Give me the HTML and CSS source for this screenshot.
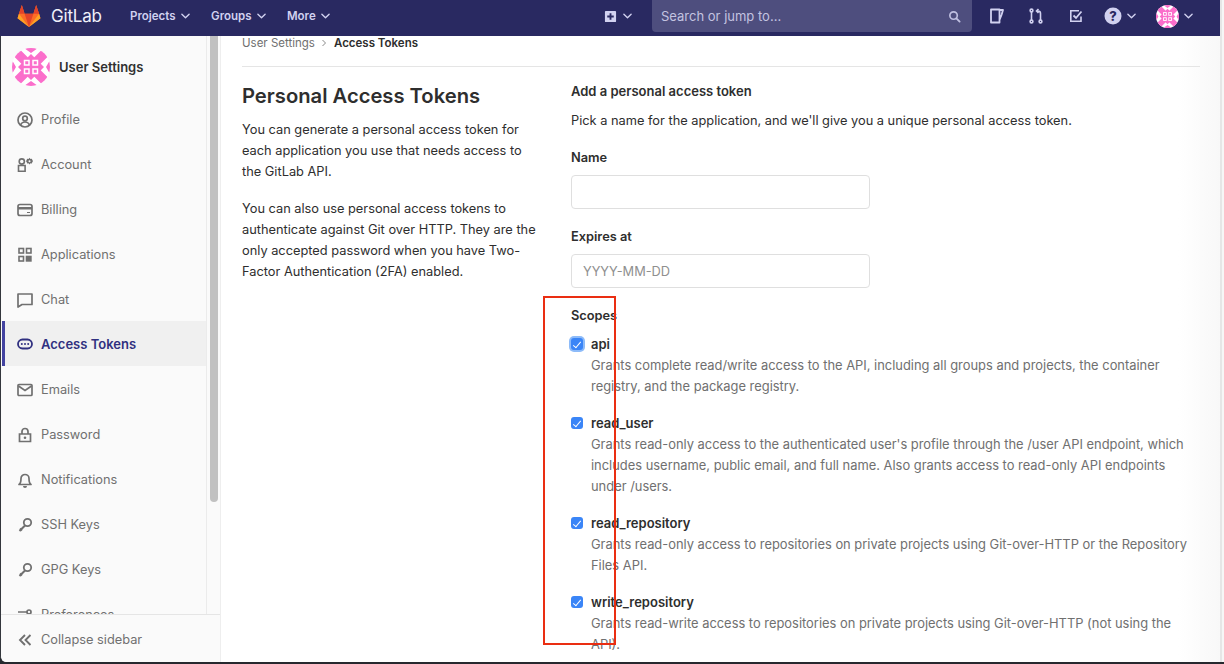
FILE: index.html
```html
<!DOCTYPE html>
<html lang="en">
<head>
<meta charset="utf-8">
<title>Personal Access Tokens</title>
<link rel="stylesheet" href="styles.css">
</head>
<body>
<svg class="defs" width="0" height="0" aria-hidden="true">
  <symbol id="avatar" viewBox="0 0 38 38">
    <clipPath id="avatar-clip"><circle cx="19" cy="19" r="19"/></clipPath>
    <g clip-path="url(#avatar-clip)">
      <rect width="38" height="38" fill="#fff"/>
      <path d="M5 5l28 28M5 33L33 5" stroke="#fb6ecb" stroke-width="9"/>
      <path fill="#fb6ecb" d="M19 6l13 13-13 13L6 19zM12 0h14l-7 5zM12 38h14l-7-5zM0 12v14l4-7zM38 12v14l-4-7z"/>
      <g fill="#fb6ecb" stroke="#fff" stroke-width="1.500">
        <rect x="12.500" y="12.500" width="4.500" height="4.500"/>
        <rect x="21" y="12.500" width="4.500" height="4.500"/>
        <rect x="12.500" y="21" width="4.500" height="4.500"/>
        <rect x="21" y="21" width="4.500" height="4.500"/>
      </g>
    </g>
  </symbol>
  <symbol id="chev" viewBox="0 0 10 6"><path d="M1 1l4 4 4-4" fill="none" stroke="currentColor" stroke-width="1.500" stroke-linecap="round" stroke-linejoin="round"/></symbol>
</svg>
<div class="app">
  <header class="navbar">
    <div class="brand">
      <svg class="logo" viewBox="0 0 26 24" width="24" height="22">
        <path fill="#fc6d26" d="M13 24L.5 14.500 2 9.500 5.200 0l3 9.500h9.600l3-9.500 3.200 9.500 1.500 5z"/>
        <path fill="#e24329" d="M13 24L8.200 9.500h9.600z"/>
        <path fill="#fca326" d="M13 24L2 9.500.5 14.500zM13 24l11-14.500 1.500 5z"/>
        <path fill="#e24329" d="M2 9.500h6.200L5.200 0zM24 9.500h-6.200L20.800 0z"/>
      </svg>
      <span class="brand-name">GitLab</span>
    </div>
    <nav class="menu">
      <a class="menu-item">Projects <svg class="chev"><use href="#chev"/></svg></a>
      <a class="menu-item">Groups <svg class="chev"><use href="#chev"/></svg></a>
      <a class="menu-item">More <svg class="chev"><use href="#chev"/></svg></a>
    </nav>
    <div class="new-btn">
      <svg class="ico14" viewBox="0 0 14 14"><path fill="#d1d1f0" fill-rule="evenodd" d="M2 1h10a1 1 0 0 1 1 1v10a1 1 0 0 1-1 1H2a1 1 0 0 1-1-1V2a1 1 0 0 1 1-1zm4 2.500v2.500H3.500v2H6v2.500h2V8h2.500V6H8V3.500z"/></svg>
      <svg class="chev"><use href="#chev"/></svg>
    </div>
    <div class="search">
      <span>Search or jump to...</span>
      <svg class="ico14" viewBox="0 0 14 14"><circle cx="6" cy="6" r="4" fill="none" stroke="#bfbfe0" stroke-width="1.800"/><path d="M9 9l3.500 3.500" stroke="#bfbfe0" stroke-width="2" stroke-linecap="round"/></svg>
    </div>
    <div class="nav-icons">
      <svg class="ico16 i-issue" viewBox="0 0 14 16"><path fill="none" stroke="#d1d1f0" stroke-width="1.800" stroke-linejoin="round" d="M1 1.500h8.500v13H1zM9.500 2H13l-1.500 5-2 5"/></svg>
      <svg class="ico16 i-mr" viewBox="0 0 14 16"><g fill="none" stroke="#d1d1f0" stroke-width="1.600"><circle cx="2.500" cy="2.500" r="1.400"/><circle cx="2.500" cy="13.500" r="1.400"/><circle cx="11.500" cy="13.500" r="1.400"/><path d="M2.500 4v8M11.500 12V5.500Q11.500 3 9 3H7.500M9.500 1L7.500 3l2 2"/></g></svg>
      <svg class="ico16 i-todo" viewBox="0 0 14 14"><path fill="none" stroke="#d1d1f0" stroke-width="1.600" d="M12 7.500V12.200H1.800V1.800H10"/><path fill="none" stroke="#d1d1f0" stroke-width="1.800" d="M4.500 6.500L7 9l5.500-6.500"/></svg>
      <div class="icon-drop">
        <svg class="ico18" viewBox="0 0 18 18"><circle cx="9" cy="9" r="8.500" fill="#d1d1f0"/><text class="help-q" x="9" y="13.500" text-anchor="middle">?</text></svg>
        <svg class="chev"><use href="#chev"/></svg>
      </div>
      <div class="icon-drop user-drop">
        <svg class="nav-avatar"><use href="#avatar"/></svg>
        <svg class="chev"><use href="#chev"/></svg>
      </div>
    </div>
  </header>

  <div class="body-row">
    <aside class="sidebar">
      <div class="side-scroll">
        <div class="side-head">
          <svg class="side-avatar"><use href="#avatar"/></svg>
          <span>User Settings</span>
        </div>
        <ul class="side-list">
          <li class="side-item"><svg class="sico" viewBox="0 0 16 16"><g fill="none" stroke="currentColor" stroke-width="1.700"><circle cx="8" cy="8" r="7"/><circle cx="8" cy="6.500" r="2.300"/><path d="M3.500 13c1-2.500 2.500-3 4.500-3s3.500.5 4.500 3"/></g></svg>Profile</li>
          <li class="side-item"><svg class="sico" viewBox="0 0 16 16"><g fill="none" stroke="currentColor" stroke-width="1.600"><circle cx="4.800" cy="4.500" r="2.600"/><path d="M1.500 14.200V8.500h6.600v5.700z"/></g><path fill="currentColor" fill-rule="evenodd" d="M12.500.8l1 1.100 1.500-.2.300 1.500 1 .9-1 .9-.3 1.500-1.500-.2-1 1.100-1-1.100-1.500.2-.3-1.500-1-.9 1-.9.3-1.500 1.500.2zm0 2.400a1 1 0 1 0 0 2 1 1 0 0 0 0-2z"/></svg>Account</li>
          <li class="side-item"><svg class="sico" viewBox="0 0 16 16"><rect x="1" y="2.500" width="14" height="11" rx="2" fill="none" stroke="currentColor" stroke-width="1.700"/><path d="M1 6.300h14" stroke="currentColor" stroke-width="2.400"/><path d="M10 10.500h3" stroke="currentColor" stroke-width="1.200"/></svg>Billing</li>
          <li class="side-item"><svg class="sico" viewBox="0 0 16 16"><g fill="none" stroke="currentColor" stroke-width="1.600"><rect x="2" y="1.500" width="4.500" height="4.500"/><rect x="9.500" y="1.500" width="4.500" height="4.500"/><rect x="2" y="9.500" width="4.500" height="4.500"/></g><rect x="8.700" y="8.700" width="6" height="6" fill="currentColor"/></svg>Applications</li>
          <li class="side-item"><svg class="sico" viewBox="0 0 16 16"><path fill="none" stroke="currentColor" stroke-width="1.700" stroke-linejoin="round" d="M1 2h14v10.500H5l-4 2.500z"/></svg>Chat</li>
          <li class="side-item active"><svg class="sico" viewBox="0 0 16 16"><rect x="1" y="3.500" width="14" height="9" rx="4.500" fill="none" stroke="currentColor" stroke-width="1.800"/><circle cx="4.800" cy="8" r="1" fill="currentColor"/><circle cx="8" cy="8" r="1" fill="currentColor"/><circle cx="11.200" cy="8" r="1" fill="currentColor"/></svg>Access Tokens</li>
          <li class="side-item"><svg class="sico" viewBox="0 0 16 16"><rect x="1" y="2.500" width="14" height="11" rx="1" fill="none" stroke="currentColor" stroke-width="1.700"/><path d="M1.500 4l6.500 4.500L14.500 4" fill="none" stroke="currentColor" stroke-width="1.700"/></svg>Emails</li>
          <li class="side-item"><svg class="sico" viewBox="0 0 16 16"><path fill="none" stroke="currentColor" stroke-width="1.700" d="M5 7V4.500a3 3 0 0 1 6 0V7M2.500 7h11v7.500h-11z"/><circle cx="8" cy="10.700" r="1.300" fill="currentColor"/></svg>Password</li>
          <li class="side-item"><svg class="sico" viewBox="0 0 16 16"><path fill="none" stroke="currentColor" stroke-width="1.700" stroke-linejoin="round" d="M2 12.500c1.500-1 2-2.500 2-6a4 4 0 0 1 8 0c0 3.500.5 5 2 6z"/><path fill="currentColor" d="M6 14h4a2 2 0 0 1-4 0z"/></svg>Notifications</li>
          <li class="side-item"><svg class="sico" viewBox="0 0 16 16"><circle cx="10.500" cy="5.500" r="3.700" fill="none" stroke="currentColor" stroke-width="1.800"/><path d="M8 8.500L2.500 14M3 11.500l2 2" fill="none" stroke="currentColor" stroke-width="2"/></svg>SSH Keys</li>
          <li class="side-item"><svg class="sico" viewBox="0 0 16 16"><circle cx="10.500" cy="5.500" r="3.700" fill="none" stroke="currentColor" stroke-width="1.800"/><path d="M8 8.500L2.500 14M3 11.500l2 2" fill="none" stroke="currentColor" stroke-width="2"/></svg>GPG Keys</li>
          <li class="side-item"><svg class="sico" viewBox="0 0 16 16"><path d="M1 5h9M1 11h5" stroke="currentColor" stroke-width="1.700"/><circle cx="12" cy="5" r="2" fill="none" stroke="currentColor" stroke-width="1.700"/></svg>Preferences</li>
        </ul>
        <div class="side-thumb"></div>
      </div>
      <div class="collapse">
        <svg class="sico" viewBox="0 0 16 16"><path d="M8 3L3 8l5 5M13.500 3l-5 5 5 5" fill="none" stroke="currentColor" stroke-width="1.900"/></svg>Collapse sidebar
      </div>
    </aside>

    <main class="content">
      <div class="crumbs">
        <span>User Settings</span>
        <svg class="crumb-sep" viewBox="0 0 6 8"><path d="M1.500 1l3 3-3 3" fill="none" stroke="#8a8a8a" stroke-width="1"/></svg>
        <b>Access Tokens</b>
      </div>
      <div class="columns">
        <section class="intro">
          <h1>Personal Access Tokens</h1>
          <p>You can generate a personal access token for each application you use that needs access to the GitLab API.</p>
          <p>You can also use personal access tokens to authenticate against Git over HTTP. They are the only accepted password when you have Two-Factor Authentication (2FA) enabled.</p>
        </section>
        <section class="form">
          <h2>Add a personal access token</h2>
          <p class="lead">Pick a name for the application, and we'll give you a unique personal access token.</p>
          <label class="field-label">Name</label>
          <input class="field" type="text">
          <label class="field-label">Expires at</label>
          <input class="field" type="text" placeholder="YYYY-MM-DD">
          <div class="field-label scopes-label">Scopes</div>
          <div class="scope">
            <input class="check focused" type="checkbox" checked>
            <div><b>api</b><p>Grants complete read/write access to the API, including all groups and projects, the container registry, and the package registry.</p></div>
          </div>
          <div class="scope">
            <input class="check" type="checkbox" checked>
            <div><b>read_user</b><p>Grants read-only access to the authenticated user's profile through the /user API endpoint, which includes username, public email, and full name. Also grants access to read-only API endpoints under /users.</p></div>
          </div>
          <div class="scope">
            <input class="check" type="checkbox" checked>
            <div><b>read_repository</b><p>Grants read-only access to repositories on private projects using Git-over-HTTP or the Repository Files API.</p></div>
          </div>
          <div class="scope">
            <input class="check" type="checkbox" checked>
            <div><b>write_repository</b><p>Grants read-write access to repositories on private projects using Git-over-HTTP (not using the API).</p></div>
          </div>
        </section>
      </div>
    </main>
    <div class="annotation"></div>
  </div>
</div>
</body>
</html>
```
FILE: styles.css
```css
* { box-sizing: border-box; }
html, body { margin: 0; height: 100%; overflow: hidden; background: #f6f6f6; }
body { font-family: Inter, "Noto Sans", sans-serif; font-size: 12.800px; color: #2e2e2e; }
.defs { position: absolute; }
.app { width: 1222px; height: 662px; display: flex; flex-direction: column; position: relative; border-right: 2px solid #e6e6e6; }
body::after { content: ""; position: fixed; left: 0; right: 0; bottom: 0; height: 2px; background: #26282e; }

.navbar { height: 36px; width: 1220px; flex: none; background: #292961; display: flex; align-items: center; padding-bottom: 4px; color: #d1d1f0; }
.brand { display: flex; align-items: center; width: 130px; padding-left: 17px; }
.logo { flex: none; }
.brand-name { margin-left: 10px; font-size: 17px; color: #f0f0fa; letter-spacing: -.2px; }
.menu { display: flex; gap: 21.500px; width: 475px; font-weight: 600; font-size: 11.500px; }
.menu-item { display: flex; align-items: center; gap: 5px; }
.chev { width: 9px; height: 6px; color: #d1d1f0; flex: none; }
.new-btn { display: flex; align-items: center; gap: 6px; width: 47px; margin-left: -1px; margin-right: 1px; }
.ico14 { width: 13px; height: 13px; flex: none; }
.search { width: 320px; height: 32px; background: #4e4e7e; border-radius: 0 0 4px 4px; display: flex; align-items: center; justify-content: space-between; padding: 0 11px 0 9px; color: #c3c3e0; font-size: 13px; }
.nav-icons { display: flex; align-items: center; margin-left: 18px; flex: 1; }
.ico16 { height: 16px; width: 14px; flex: none; }
.i-mr { margin-left: 25px; }
.i-todo { margin-left: 26px; }
.icon-drop { display: flex; align-items: center; gap: 5px; margin-left: 21px; }
.ico18 { width: 18px; height: 18px; }
.help-q { font-size: 13px; font-weight: 800; fill: #292961; font-family: Inter, sans-serif; }
.user-drop { margin-left: 20px; }
.nav-avatar { width: 23px; height: 23px; }

.body-row { flex: 1; min-height: 0; display: flex; position: relative; background: #26282e; }
.sidebar { width: 221px; flex: none; display: flex; flex-direction: column; border-left: 1px solid #33363c; background: #fafafa; border-right: 1px solid #eee; border-radius: 0 0 0 6px; overflow: hidden; }
.side-scroll { flex: 1; min-height: 0; overflow: hidden; position: relative; }
.side-scroll::before { content: ""; position: absolute; left: 205px; top: 0; bottom: 0; width: 1px; background: #ebebeb; }
.side-thumb { position: absolute; left: 209px; top: 0; width: 8px; height: 466px; border-radius: 0 0 4px 4px; background: #c1c1c1; }
.side-head { height: 60px; padding: 2px 0 0 11px; display: flex; align-items: center; gap: 9px; font-weight: 600; font-size: 13px; color: #303030; width: 205px; }
.side-avatar { width: 38px; height: 38px; flex: none; }
.side-list { list-style: none; margin: 0; padding: 0; width: 205px; }
.side-item { height: 45px; display: flex; align-items: center; gap: 8px; padding: 2px 0 0 16px; color: #707070; }
.side-item.active { background: #f0f0f0; font-weight: 600; font-size: 13px; padding-top: 1px; box-shadow: inset 1px 0 0 #fafafa, inset 4px 0 0 #4343a0; color: #303080; }
.sico { width: 16px; height: 16px; flex: none; }
.collapse { height: 48px; flex: none; display: flex; align-items: center; gap: 8px; padding: 2px 0 0 16px; color: #707070; border-top: 1px solid #e5e5e5; background: #fafafa; }

.content { flex: 1; min-width: 0; overflow: hidden; padding: 0 20px 0 21px; background: linear-gradient(90deg, #fff 0, #fff 957px, #f8f8f8 100%); }
.crumbs { height: 31px; border-bottom: 1px solid #e5e5e5; display: flex; align-items: flex-start; gap: 6px; font-size: 11.500px; color: #707070; line-height: 14px; }
.crumbs b { font-weight: 600; color: #2e2e2e; margin-left: 1px; }
.crumb-sep { width: 6px; height: 8px; margin-top: 3px; }
.columns { display: flex; gap: 32px; }
.intro { width: 297px; flex: none; }
.intro h1 { margin: 16px 0 11px; font-size: 20.200px; line-height: 25px; font-weight: 600; color: #2e2e2e; }
.intro p { margin: 0 0 16px; line-height: 21px; color: #2e2e2e; }
.form { flex: 1; min-width: 0; }
.form h2 { margin: 16px 0 0; font-size: 13px; line-height: 17px; font-weight: 600; }
.lead { margin: 10px 0 0; line-height: 21px; }
.field-label { display: block; margin-top: 16px; font-weight: 600; line-height: 21px; font-size: 12.800px; }
.field + .field-label { margin-top: 17px; }
.field { display: block; width: 299px; height: 34px; margin: 7px 0 0; border: 1px solid #dfdfdf; border-radius: 4px; padding: 0 11px; font: 12.800px Inter, sans-serif; background: #fff; }
.field::placeholder { color: #8f8f8f; }
.scopes-label { margin-bottom: 8px; }
.scope { display: flex; gap: 8px; margin-bottom: 16px; }
.scope b { font-weight: 600; font-size: 13px; display: block; line-height: 21px; color: #2e2e2e; }
.scope p { margin: 0; max-width: 600px; font-size: 12.900px; line-height: 21px; color: #707070; }
.check { appearance: none; position: relative; width: 12px; height: 12px; margin: 4px 0 0; flex: none; border-radius: 3px; background: #3a85f7; }
.check::before { content: ""; position: absolute; left: 4px; top: 1.500px; width: 3px; height: 7px; border: solid #fff; border-width: 0 1.300px 1.300px 0; transform: rotate(40deg); }
.check.focused { box-shadow: 0 0 0 2px #8dbbf9; }
.annotation { position: absolute; left: 543px; top: 260px; width: 73px; height: 349px; border: 2px solid #ea2e12; }
```
